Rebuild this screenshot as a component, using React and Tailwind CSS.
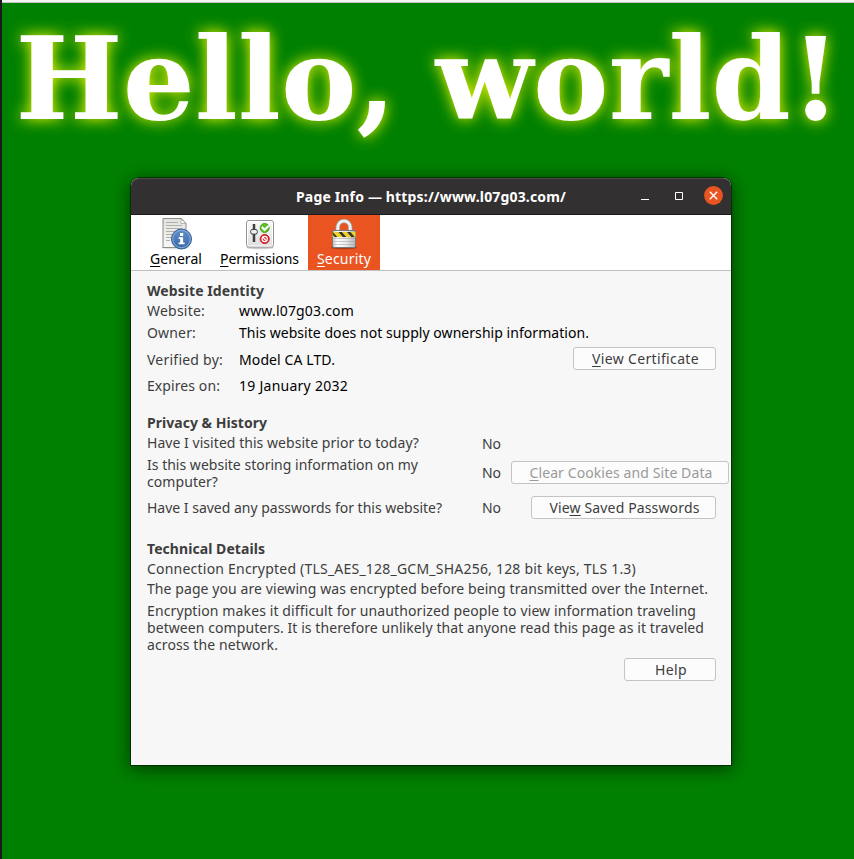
import { useLayoutEffect, useRef, useState } from "react";

// Text tracked so that the line fills a given width.
function Fit({ w, className = "", children }) {
  const ref = useRef(null);
  const [gap, setGap] = useState(0);
  useLayoutEffect(() => {
    const el = ref.current;
    el.style.letterSpacing = "0px";
    const n = el.textContent.length;
    const next = (w - el.getBoundingClientRect().width) / n;
    el.style.letterSpacing = next + "px";
    setGap(next);
  }, [w]);
  return (
    <span className={"block w-max shrink-0 whitespace-nowrap " + className}>
      <span ref={ref} className="inline-block" style={{ letterSpacing: gap }}>
        {children}
      </span>
    </span>
  );
}

function Key({ children }) {
  return (
    <span className="underline decoration-1 underline-offset-[2px] [text-decoration-skip-ink:none]">
      {children}
    </span>
  );
}

function Button({ className = "", children }) {
  return (
    <button
      className={
        "flex h-[23px] shrink-0 items-center justify-center rounded-[3px] border border-[#c4c4c4] bg-[#fcfcfc] pl-[2px] " +
        className
      }
    >
      {children}
    </button>
  );
}

function GeneralIcon() {
  return (
    <svg width="32" height="32" viewBox="0 0 32 32" className="block">
      <defs>
        <linearGradient id="page" x1="0" y1="0" x2="0" y2="1">
          <stop offset="0" stopColor="#e2e2de" />
          <stop offset="1" stopColor="#f8f8f6" />
        </linearGradient>
        <linearGradient id="blue" x1="0" y1="0" x2="0" y2="1">
          <stop offset="0" stopColor="#5f8fc8" />
          <stop offset="1" stopColor="#3a68a8" />
        </linearGradient>
      </defs>
      <ellipse cx="15" cy="29.5" rx="14" ry="1.8" fill="#000" opacity=".12" />
      <path d="M3 .5h18.5l4.5 5V29.5H3Z" fill="url(#page)" stroke="#8a8c87" />
      <path d="M21 .8v4.7h5Z" fill="#fff" stroke="#9a9a96" strokeWidth=".7" />
      <path d="M6 4.5h12M6 7.5h16M6 10.5h16M6 13.5h16M6 16.5h8M6 19.5h6M6 22.5h4" stroke="#afb0ac" />
      <circle cx="21.5" cy="21" r="10" fill="url(#blue)" stroke="#31609e" />
      <circle cx="21.5" cy="21" r="8.7" fill="none" stroke="#91b2da" strokeWidth=".9" />
      <path d="M20 15h3.2v3H20ZM18.7 19.2h4.4v5.3h1.5v1.8h-6v-1.8h1.6V21h-1.5Z" fill="#fff" />
    </svg>
  );
}

function PermissionsIcon() {
  return (
    <svg width="32" height="32" viewBox="0 0 32 32" className="block">
      <defs>
        <linearGradient id="panel" x1="0" y1="0" x2="0" y2="1">
          <stop offset="0" stopColor="#fafafa" />
          <stop offset="1" stopColor="#dedede" />
        </linearGradient>
      </defs>
      <ellipse cx="16" cy="29.5" rx="14" ry="1.8" fill="#000" opacity=".2" />
      <rect x="2.5" y="2.5" width="27" height="26.5" rx="2.5" fill="url(#panel)" stroke="#929292" />
      <rect x="3.5" y="3.5" width="25" height="24.5" rx="1.5" fill="none" stroke="#fff" />
      <path d="M10 6v18" stroke="#3c3f3f" strokeWidth="2.5" />
      <path d="M7.5 11.5h5l1 2.3-1 2.3h-5l-1-2.3Z" fill="#eee" stroke="#444" />
      <circle cx="20.7" cy="10" r="4.5" fill="#5fc427" stroke="#4d9f1d" />
      <path d="m17.8 9 2.7 2.8 4.4-4" fill="none" stroke="#fff" strokeWidth="2" />
      <circle cx="20.7" cy="21" r="4.5" fill="#eb2229" stroke="#b91b20" />
      <circle cx="20.7" cy="21" r="2.6" fill="none" stroke="#fff" strokeWidth="1.2" />
      <path d="m18.8 19.2 3.8 3.7" stroke="#fff" strokeWidth="1.2" />
    </svg>
  );
}

function SecurityIcon() {
  return (
    <svg width="32" height="32" viewBox="0 0 32 32" className="block">
      <defs>
        <linearGradient id="metal" x1="0" y1="0" x2="1" y2="0">
          <stop offset="0" stopColor="#c4c4c4" />
          <stop offset=".2" stopColor="#fff" />
          <stop offset=".6" stopColor="#e8e8e8" />
          <stop offset="1" stopColor="#b4b4b4" />
        </linearGradient>
        <clipPath id="band">
          <rect x="4.5" y="14" width="23" height="5.2" />
        </clipPath>
      </defs>
      <ellipse cx="16" cy="29.5" rx="13" ry="1.8" fill="#000" opacity=".28" />
      <path d="M9.8 14V9.2a6.2 6.2 0 0 1 12.4 0V14" fill="none" stroke="#9b8f89" strokeWidth="4.6" />
      <path d="M9.8 14V9.2a6.2 6.2 0 0 1 12.4 0V14" fill="none" stroke="#f0f0f0" strokeWidth="3" />
      <rect x="4.5" y="12.5" width="23" height="17" rx="1.5" fill="url(#metal)" stroke="#777" />
      <path d="M5.5 20.5h21M5.5 23.5h21M5.5 26.5h21" stroke="#999" strokeWidth=".8" opacity=".6" />
      <g clipPath="url(#band)">
        <path d="M4 14h24v5.2H4Z" fill="#ecd02c" />
        <path d="m2 14 5 5.2h2.6L4.6 14ZM10.5 14l4.5 5.2h3.4L13.9 14ZM19 14l4.5 5.2h3.4L22.4 14Z" fill="#37352c" />
      </g>
    </svg>
  );
}

export default function App() {
  return (
    <div className="h-[859px] w-[854px] overflow-hidden border-l-2 border-[#1b181e] bg-[#008000] font-['Noto_Sans','Open_Sans',sans-serif] text-[14px] leading-[17px] text-[#3d3d3d]">
      <div className="h-[3px] border-b border-[#c5c5c5] bg-[#f3f3f3]" />
      <h1 className="h-[175px] pt-[9px] pl-[13.5px] font-['DejaVu_Serif',serif] text-[113.4px] leading-[135px] font-bold whitespace-nowrap text-white [text-shadow:0_0_15px_yellow]">
        Hello, world!
      </h1>

      <section className="ml-[129px] flex h-[587px] w-[600px] flex-col rounded-t-[8px] bg-[#f7f7f7] shadow-[0_0_0_1px_rgba(0,0,0,0.45),0_3px_18px_1px_rgba(0,0,0,0.55)]">
        <header className="flex h-[37px] shrink-0 items-center rounded-t-[8px] border-t border-b border-t-[#4b4948] border-b-[#1d1b1b] bg-[#333031] pr-[8px] pl-[165px] text-white">
          <Fit w={270} className="font-bold">Page Info — https://www.l07g03.com/</Fit>
          <div className="ml-auto flex items-center">
            <svg width="8" height="8" viewBox="0 0 8 8" className="mr-[26px]">
              <path d="M0 6.5h8" stroke="#fff" />
            </svg>
            <svg width="8" height="8" viewBox="0 0 8 8" className="relative -top-px mr-[21px]">
              <path d="M.5.5h7v7h-7Z" fill="none" stroke="#fff" />
            </svg>
            <svg width="19" height="19" viewBox="0 0 19 19" className="relative -top-px">
              <circle cx="9.5" cy="9.5" r="9.4" fill="#e95420" />
              <path d="m5.8 5.8 7.4 7.4m0-7.4-7.4 7.4" stroke="#fff" strokeWidth="1.4" />
            </svg>
          </div>
        </header>

        <nav className="flex h-[56px] shrink-0 border-b border-[#c0c0c0] bg-white pl-[10px] text-black">
          <div className="flex w-[70px] flex-col items-center pt-[3px]">
            <GeneralIcon />
            <Fit w={52}><Key>G</Key>eneral</Fit>
          </div>
          <div className="flex w-[97px] flex-col items-center pt-[3px]">
            <PermissionsIcon />
            <Fit w={79}><Key>P</Key>ermissions</Fit>
          </div>
          <div className="flex w-[72px] flex-col items-center bg-[#e95420] pt-[3px] text-white">
            <SecurityIcon />
            <Fit w={54}><Key>S</Key>ecurity</Fit>
          </div>
        </nav>

        <main className="flex flex-col pt-[11px] pl-[16px]">
          <Fit w={117} className="font-bold">Website Identity</Fit>
          <div className="mt-[3px] flex">
            <div className="w-[92px]"><Fit w={58}>Website:</Fit></div>
            <Fit w={115} className="text-black">www.l07g03.com</Fit>
          </div>
          <div className="mt-[5px] flex">
            <div className="w-[92px]"><Fit w={49}>Owner:</Fit></div>
            <Fit w={350} className="text-black">This website does not supply ownership information.</Fit>
          </div>
          <div className="mt-[6px] flex h-[23px] pr-[15px]">
            <div className="w-[92px] pt-[4px]"><Fit w={76}>Verified by:</Fit></div>
            <Fit w={96} className="pt-[4px] text-black">Model CA LTD.</Fit>
            <Button className="ml-auto w-[143px]">
              <Fit w={107}><Key>V</Key>iew Certificate</Fit>
            </Button>
          </div>
          <div className="mt-[7px] flex">
            <div className="w-[92px]"><Fit w={73}>Expires on:</Fit></div>
            <Fit w={109} className="text-black">19 January 2032</Fit>
          </div>

          <Fit w={120} className="mt-[20px] font-bold">Privacy &amp; History</Fit>
          <div className="mt-[3px] flex">
            <div className="w-[335px]"><Fit w={272}>Have I visited this website prior to today?</Fit></div>
            <Fit w={19} className="pt-px">No</Fit>
          </div>
          <div className="mt-[4px] flex h-[34px]">
            <div className="w-[335px]">
              <Fit w={271}>Is this website storing information on my</Fit>
              <Fit w={71}>computer?</Fit>
            </div>
            <Fit w={19} className="pt-[8px]">No</Fit>
            <Button className="mt-[5px] ml-[10px] w-[218px] text-[#9a9a9a]">
              <Fit w={183}><Key>C</Key>lear Cookies and Site Data</Fit>
            </Button>
          </div>
          <div className="mt-[6px] flex h-[23px] pr-[15px]">
            <div className="w-[335px] pt-[3px]"><Fit w={295}>Have I saved any passwords for this website?</Fit></div>
            <Fit w={19} className="pt-[3px]">No</Fit>
            <Button className="ml-auto w-[185px]">
              <Fit w={150}>Vie<Key>w</Key> Saved Passwords</Fit>
            </Button>
          </div>

          <Fit w={118} className="mt-[21px] font-bold">Technical Details</Fit>
          <Fit w={489} className="mt-[3px]">Connection Encrypted (TLS_AES_128_GCM_SHA256, 128 bit keys, TLS 1.3)</Fit>
          <Fit w={561} className="mt-[3px]">The page you are viewing was encrypted before being transmitted over the Internet.</Fit>
          <Fit w={549} className="mt-[5px]">Encryption makes it difficult for unauthorized people to view information traveling</Fit>
          <Fit w={557}>between computers. It is therefore unlikely that anyone read this page as it traveled</Fit>
          <Fit w={131}>across the network.</Fit>
          <Button className="mt-[5px] ml-[477px] w-[92px]">
            <Fit w={32}>Help</Fit>
          </Button>
        </main>
      </section>
    </div>
  );
}
